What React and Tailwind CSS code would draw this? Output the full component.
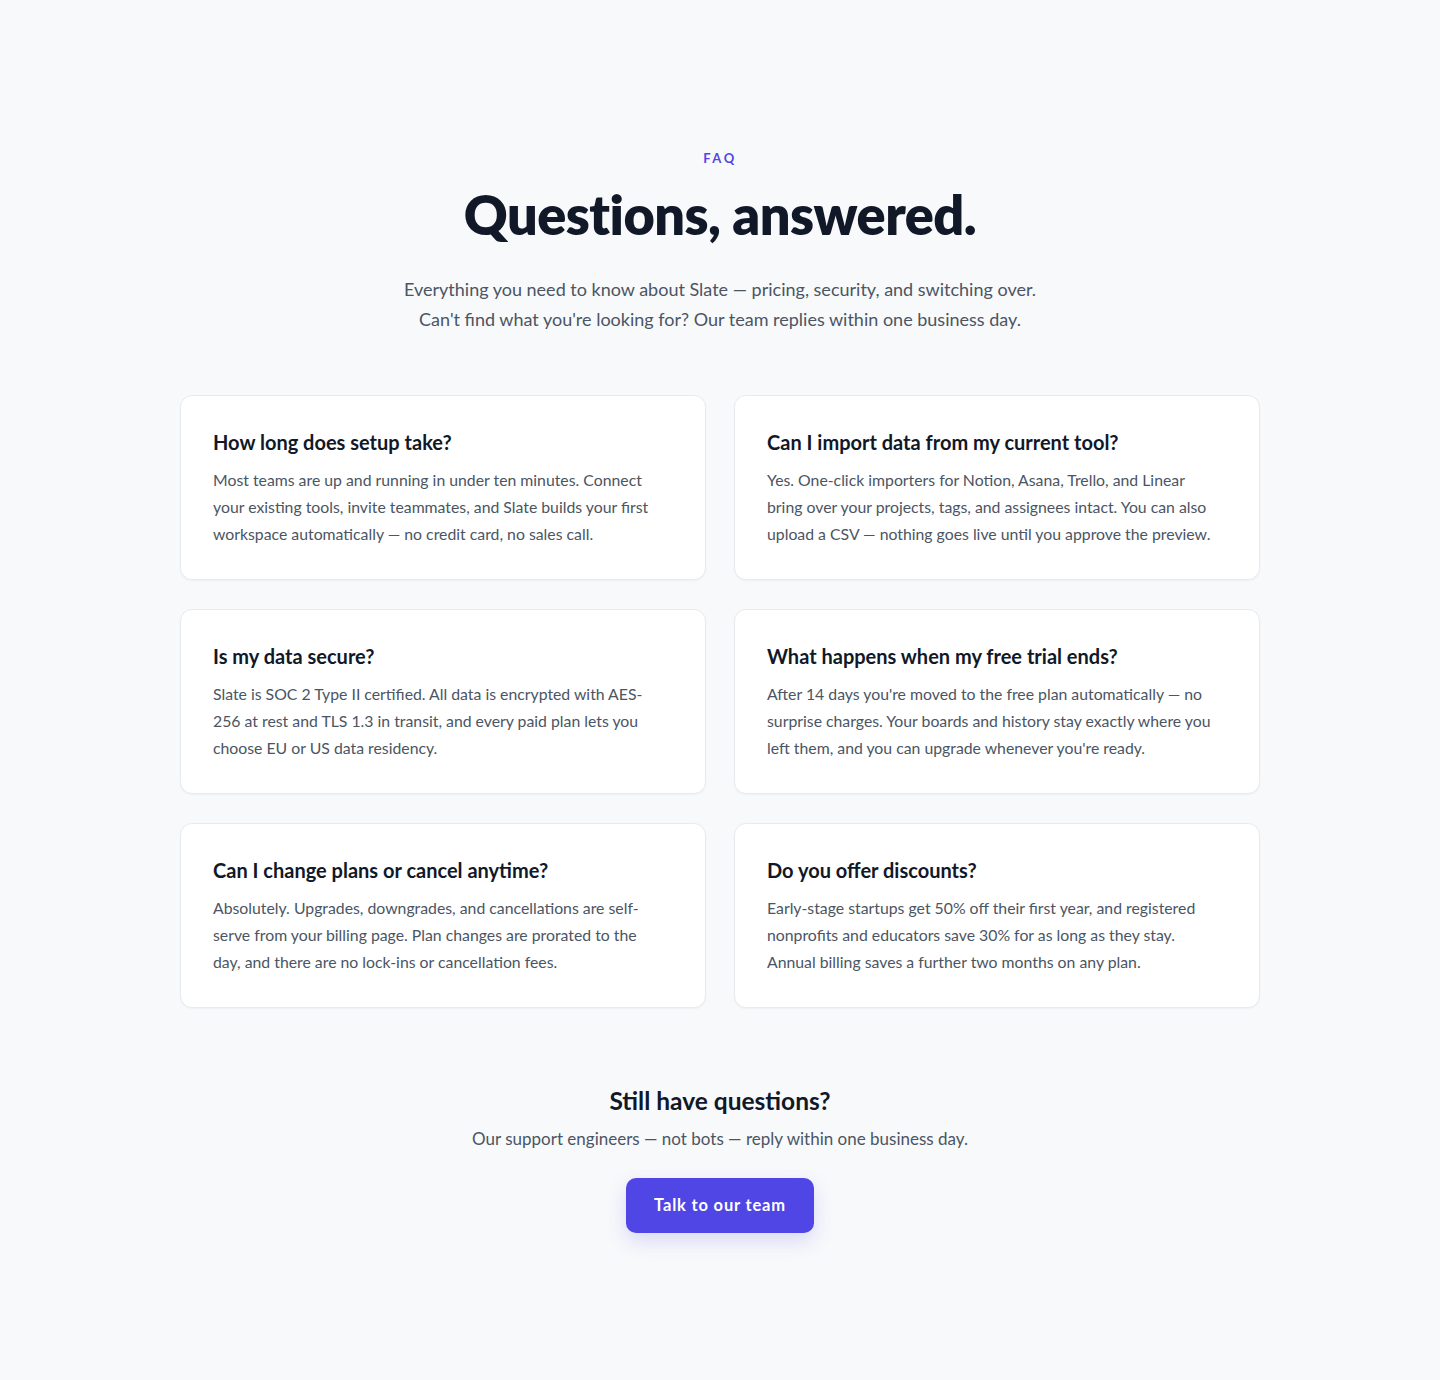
import React from 'react';

const faqs = [
  {
    q: 'How long does setup take?',
    a: 'Most teams are up and running in under ten minutes. Connect your existing tools, invite teammates, and Slate builds your first workspace automatically — no credit card, no sales call.',
  },
  {
    q: 'Can I import data from my current tool?',
    a: 'Yes. One-click importers for Notion, Asana, Trello, and Linear bring over your projects, tags, and assignees intact. You can also upload a CSV — nothing goes live until you approve the preview.',
  },
  {
    q: 'Is my data secure?',
    a: 'Slate is SOC 2 Type II certified. All data is encrypted with AES-256 at rest and TLS 1.3 in transit, and every paid plan lets you choose EU or US data residency.',
  },
  {
    q: 'What happens when my free trial ends?',
    a: "After 14 days you're moved to the free plan automatically — no surprise charges. Your boards and history stay exactly where you left them, and you can upgrade whenever you're ready.",
  },
  {
    q: 'Can I change plans or cancel anytime?',
    a: 'Absolutely. Upgrades, downgrades, and cancellations are self-serve from your billing page. Plan changes are prorated to the day, and there are no lock-ins or cancellation fees.',
  },
  {
    q: 'Do you offer discounts?',
    a: 'Early-stage startups get 50% off their first year, and registered nonprofits and educators save 30% for as long as they stay. Annual billing saves a further two months on any plan.',
  },
];

export default function App() {
  return (
    <div className="min-h-[1380px] bg-[#f8f9fb] font-['Lato','Noto_Sans',sans-serif] text-[#111827]">
      <section className="mx-auto w-[1080px] pt-[149px] pb-[146px]">
        <div className="text-center">
          <p className="text-[13px] font-bold tracking-[0.2em] text-[#4f46e5]">FAQ</p>
          <h1 className="mt-[14px] text-[54px] leading-[64px] font-extrabold tracking-[-0.01em] text-[#111827]">
            Questions, answered.
          </h1>
          <p className="mx-auto mt-[27px] text-[18px] leading-[30px] text-[#4b5563]">
            Everything you need to know about Slate — pricing, security, and switching over.
            <br />
            Can't find what you're looking for? Our team replies within one business day.
          </p>
        </div>

        <div className="mt-[61px] grid grid-cols-2 gap-x-[28px] gap-y-[29px]">
          {faqs.map((f) => (
            <div
              key={f.q}
              className="h-[185px] rounded-[12px] border border-[#e8eaef] bg-white px-[32px] pt-[32px] shadow-[0_1px_2px_rgba(16,24,40,0.04)]"
            >
              <h3 className="text-[20px] leading-[28px] font-bold text-[#111827]">{f.q}</h3>
              <p className="mt-[10px] pr-[6px] text-[15.8px] leading-[27px] text-[#4b5563]">{f.a}</p>
            </div>
          ))}
        </div>

        <div className="mt-[77px] flex flex-col items-center text-center">
          <h2 className="text-[24.5px] leading-[32px] font-bold text-[#111827]">Still have questions?</h2>
          <p className="mt-[9px] text-[17px] leading-[26px] text-[#4b5563]">
            Our support engineers — not bots — reply within one business day.
          </p>
          <button className="mt-[26px] h-[55px] w-[188px] rounded-[10px] bg-[#4f46e5] text-[16.5px] font-bold tracking-[0.05em] text-white shadow-[0_8px_20px_rgba(79,70,229,0.18)]">
            Talk to our team
          </button>
        </div>
      </section>
    </div>
  );
}
